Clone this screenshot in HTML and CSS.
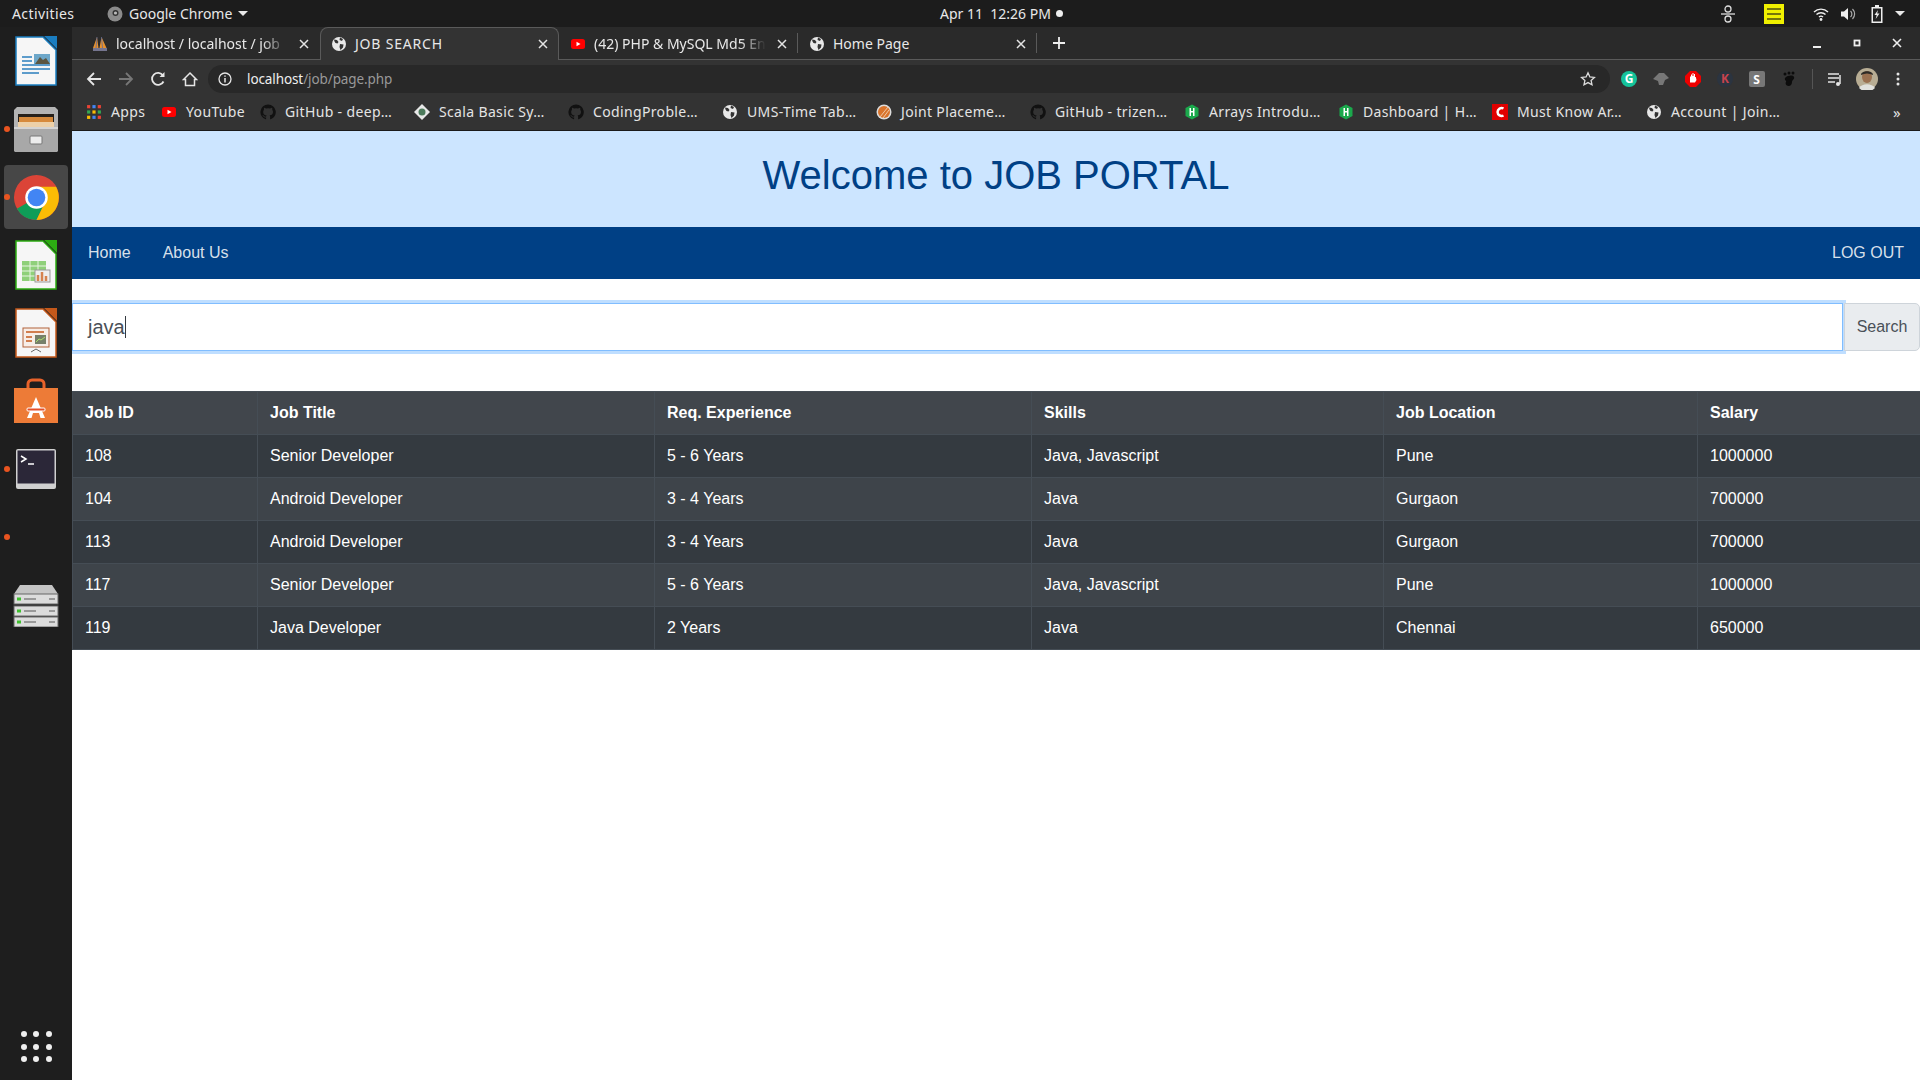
FILE: index.html
```html
<!DOCTYPE html>
<html>
	<head>
		<meta charset="UTF-8">
		<title>JOB SEARCH</title>
		<link rel="stylesheet" href="styles.css">
	</head>

	<body>
		<svg class="defs" width="0" height="0">
			<symbol id="globe" viewBox="0 0 16 16">
				<circle cx="8" cy="8" r="7" fill="#e8e8e8"/>
				<path d="M3 3.500l3 .5 1.500 2-1 1.500-2-.5-1-1.500zM9 8l3.500.5-.5 3-2.500 2.500-1-3zM9 1.500l3 1.500-1 2-2.500-1z" fill="#333"/>
			</symbol>
			<symbol id="github" viewBox="0 0 16 16">
				<path d="M8 .5a7.600 7.600 0 0 0-2.400 14.800c.4.100.5-.2.500-.4v-1.400c-2.100.5-2.600-.9-2.600-.9-.3-.9-.8-1.100-.8-1.100-.7-.5 0-.5 0-.5.8.100 1.200.8 1.200.8.700 1.200 1.800.8 2.200.6.100-.5.300-.8.500-1-1.700-.2-3.400-.8-3.400-3.700 0-.8.300-1.500.8-2-.1-.2-.3-1 .1-2 0 0 .6-.2 2.100.8a7 7 0 0 1 3.800 0c1.500-1 2.100-.8 2.100-.8.400 1 .2 1.800.1 2 .5.500.8 1.200.8 2 0 2.900-1.800 3.500-3.400 3.700.3.200.5.700.5 1.400v2.100c0 .2.100.5.500.4A7.600 7.600 0 0 0 8 .5z" fill="#111"/>
			</symbol>
			<symbol id="youtube" viewBox="0 0 16 16">
				<rect x="1" y="3" width="14" height="10" rx="2.500" fill="#f00"/>
				<path d="M6.500 5.700l4 2.300-4 2.300z" fill="#fff"/>
			</symbol>
			<symbol id="hacker" viewBox="0 0 16 16">
				<path d="M8 .5l6.500 3.500v8l-6.500 3.500-6.500-3.500v-8z" fill="#1ba94c"/>
				<path d="M5.500 4h1.500v3h2v-3h1.500v8h-1.500v-3.500h-2v3.500h-1.500z" fill="#fff"/>
			</symbol>
			<symbol id="tabclose" viewBox="0 0 10 10">
				<path d="M1 1l8 8M9 1l-8 8" stroke="#e4e4e4" stroke-width="1.500" fill="none"/>
			</symbol>
			<symbol id="doc" viewBox="0 0 42 50">
				<path d="M1 1h27l13 13v35h-40z" fill="#f6f6f6" stroke="currentColor" stroke-width="1.500"/>
				<path d="M29 0h13v13z" fill="currentColor"/>
			</symbol>
		</svg>

		<div class="topbar">
			<span class="activities">Activities</span>
			<span class="app-menu">
				<svg class="app-icon" viewBox="0 0 16 16"><circle cx="8" cy="8" r="7.500" fill="#8b8b8b"/><circle cx="8.500" cy="7" r="3" fill="#333"/><circle cx="8.500" cy="7" r="1.600" fill="#bbb"/></svg>
				Google Chrome
				<i class="caret"></i>
			</span>
			<span class="clock">Apr 11&nbsp; 12:26 PM<i class="clock-dot"></i></span>
			<span class="tray">
				<svg class="tray-a" viewBox="0 0 16 20"><circle cx="8" cy="5" r="3" fill="none" stroke="#ddd" stroke-width="1.300"/><circle cx="8" cy="15" r="3" fill="none" stroke="#ddd" stroke-width="1.300"/><path d="M1 10h14" stroke="#ddd" stroke-width="1.300"/></svg>
				<svg class="tray-b" viewBox="0 0 20 20"><rect width="20" height="20" fill="#f0f000"/><path d="M3 5h14M3 10h14M3 15h14" stroke="#77770a" stroke-width="2"/></svg>
				<svg class="tray-c" viewBox="0 0 16 14"><path d="M1 5a10 10 0 0 1 14 0M3.500 7.500a6.500 6.500 0 0 1 9 0M6 10a3 3 0 0 1 4 0" fill="none" stroke="#eee" stroke-width="1.400"/><circle cx="8" cy="12.500" r="1.400" fill="#eee"/></svg>
				<svg class="tray-d" viewBox="0 0 16 14"><path d="M1 4.500h3l4-3.500v12l-4-3.500h-3z" fill="#eee"/><path d="M10.500 4a4 4 0 0 1 0 6M12.500 2a7 7 0 0 1 0 10" fill="none" stroke="#aaa" stroke-width="1.200"/></svg>
				<svg class="tray-e" viewBox="0 0 12 18"><path d="M4 0h4v2h3.500v16h-11v-16h3.500z" fill="#eee"/><rect x="2" y="3.500" width="8" height="13" fill="#222"/><path d="M7 5l-3.500 5h2.200l-1 4 3.800-5.500h-2.300z" fill="#eee"/></svg>
				<i class="caret tray-caret"></i>
			</span>
		</div>

		<div class="desktop">
			<nav class="dock">
				<div class="dock-item">
					<svg class="dock-doc writer" viewBox="0 0 42 50"><use href="#doc"/><path d="M7 21h10M7 25h10M7 29h28M7 33h28M7 37h17" stroke="#2b7fbd" stroke-width="1.500"/><rect x="19" y="18" width="16" height="10" fill="#6da7c9"/><path d="M20 28l5-7 3 3 3-2 4 6z" fill="#5c5642"/></svg>
				</div>
				<div class="dock-item has-dot">
					<svg class="dock-icon files" viewBox="0 0 44 45">
						<path d="M3 0h38l3 3v20h-44v-20z" fill="#b4b4b4"/>
						<rect x="4" y="7" width="36" height="14" fill="#27211b"/>
						<rect x="5" y="10" width="34" height="5" fill="#d68a3c"/>
						<rect x="4" y="15" width="36" height="5" fill="#ecd0a8"/>
						<path d="M0 20h44v24l-1 1h-42l-1-1z" fill="#a8a8a8"/>
						<rect x="0" y="20" width="44" height="2" fill="#d4d4d4"/>
						<rect x="16" y="29" width="12" height="8" rx="1" fill="#ececec" stroke="#777"/>
					</svg>
				</div>
				<div class="dock-item has-dot active">
					<svg class="dock-icon chrome" viewBox="0 0 48 48"><circle cx="24" cy="24" r="23" fill="#db4437"/><path d="M24 24L4 35.500A23 23 0 0 0 24 47l11-23z" fill="#0f9d58"/><path d="M24 13h20a23 23 0 0 1-20 34l11-23z" fill="#fbbc05"/><circle cx="24" cy="24" r="11.500" fill="#fff"/><circle cx="24" cy="24" r="9" fill="#4285f4"/></svg>
				</div>
				<div class="dock-item">
					<svg class="dock-doc calc" viewBox="0 0 42 50"><use href="#doc"/><rect x="7" y="21" width="24" height="20" fill="#8fd07a"/><path d="M7 26h24M7 31h24M7 36h24M15 21v20M23 21v20" stroke="#e8f5e2"/><rect x="20" y="30" width="15" height="12" fill="#eee" stroke="#999"/><path d="M23 41v-6M27 41v-9M31 41v-5" stroke="#d5824f" stroke-width="2.500"/></svg>
				</div>
				<div class="dock-item">
					<svg class="dock-doc impress" viewBox="0 0 42 50"><use href="#doc"/><rect x="8" y="20" width="26" height="19" fill="#f7eee8" stroke="#b2623a"/><path d="M11 24h18M11 29h6M11 33h6" stroke="#c55a1d" stroke-width="1.500"/><rect x="20" y="27" width="11" height="9" fill="#77806a"/><path d="M21 34l3-3 2 1 4-3" stroke="#a9e06a" fill="none"/><path d="M16 44l5-3 5 3" stroke="#666" fill="none"/></svg>
				</div>
				<div class="dock-item">
					<svg class="dock-icon store" viewBox="0 0 44 46"><path d="M14 13v-7a4 4 0 0 1 4-4h8a4 4 0 0 1 4 4v7" fill="none" stroke="#e8622a" stroke-width="3"/><path d="M0 10h44v35h-44z" fill="#ed7b37"/><path d="M22 19l9 21h-4.500l-1.500-5h-6l-1.500 5h-4.500z" fill="#fff"/><rect x="13" y="30" width="18" height="3" rx="1" fill="#e4502a" stroke="#fff"/></svg>
				</div>
				<div class="dock-item has-dot">
					<svg class="dock-icon term" viewBox="0 0 42 42"><rect x="1" y="1" width="40" height="40" rx="2" fill="#d0d0d0"/><rect x="2.500" y="2.500" width="37" height="33" fill="#2b2738"/><path d="M6 8l5 3-5 3" fill="none" stroke="#fff" stroke-width="1.500"/><path d="M13 16h6" stroke="#fff" stroke-width="1.500"/></svg>
				</div>
				<div class="dock-item has-dot"></div>
				<div class="dock-item">
					<svg class="dock-icon server" viewBox="0 0 46 42"><path d="M7 0h32l6 9h-44z" fill="#c4c4c4"/><rect x="1" y="9" width="44" height="10" fill="#dcdcdc" stroke="#666"/><rect x="1" y="21" width="44" height="10" fill="#dcdcdc" stroke="#666"/><rect x="1" y="32" width="44" height="10" fill="#dcdcdc" stroke="#666"/><path d="M4 14h4M4 26h4M4 37h4" stroke="#3fbf2f" stroke-width="3"/><path d="M11 14h12M11 26h12M11 37h12M36 14h6M36 26h6M36 37h6" stroke="#999" stroke-width="2"/></svg>
				</div>
				<div class="apps-grid">
					<i></i><i></i><i></i><i></i><i></i><i></i><i></i><i></i><i></i>
				</div>
			</nav>

			<div class="window">
				<div class="tabstrip">
					<div class="tab">
						<svg class="favicon" viewBox="0 0 16 16"><path d="M1 12l4-11 1.500 11zM7.500 12l2-11 5 11z" fill="#e8912d"/><path d="M5 1l-1 11M9.500 1l1 11" stroke="#5a6a9a" stroke-width=".8"/><rect x="1" y="12" width="14" height="3" fill="#75758f"/></svg>
						<span class="tab-title fade">localhost / localhost / job</span>
						<svg class="tab-close"><use href="#tabclose"/></svg>
					</div>
					<div class="tab active">
						<svg class="favicon"><use href="#globe"/></svg>
						<span class="tab-title caps">JOB SEARCH</span>
						<svg class="tab-close"><use href="#tabclose"/></svg>
					</div>
					<div class="tab sep">
						<svg class="favicon"><use href="#youtube"/></svg>
						<span class="tab-title fade">(42) PHP &amp; MySQL Md5 En</span>
						<svg class="tab-close"><use href="#tabclose"/></svg>
					</div>
					<div class="tab sep">
						<svg class="favicon"><use href="#globe"/></svg>
						<span class="tab-title">Home Page</span>
						<svg class="tab-close"><use href="#tabclose"/></svg>
					</div>
					<svg class="new-tab" viewBox="0 0 12 12"><path d="M6 0v12M0 6h12" stroke="#eee" stroke-width="1.800"/></svg>
					<div class="win-btns">
						<svg viewBox="0 0 10 10"><path d="M1 9h8" stroke="#eee" stroke-width="2"/></svg>
						<svg viewBox="0 0 10 10"><rect x="2.500" y="2.500" width="5" height="5" fill="none" stroke="#eee" stroke-width="1.800"/></svg>
						<svg viewBox="0 0 10 10"><path d="M1 1l8 8M9 1l-8 8" stroke="#eee" stroke-width="1.600"/></svg>
					</div>
				</div>

				<div class="toolbar">
					<svg class="tool" viewBox="0 0 16 16"><path d="M15 8h-13M8 2l-6 6 6 6" fill="none" stroke="#e6e6e6" stroke-width="1.800"/></svg>
					<svg class="tool" viewBox="0 0 16 16"><path d="M1 8h13M8 2l6 6-6 6" fill="none" stroke="#777" stroke-width="1.800"/></svg>
					<svg class="tool" viewBox="0 0 16 16"><path d="M13.500 10.500a6 6 0 1 1-.5-6" fill="none" stroke="#e6e6e6" stroke-width="1.800"/><path d="M14.500 1v5h-5z" fill="#e6e6e6"/></svg>
					<svg class="tool" viewBox="0 0 16 16"><path d="M8 2l6.500 6.500h-2v6h-9v-6h-2z" fill="none" stroke="#e6e6e6" stroke-width="1.500"/></svg>
					<div class="omnibox">
						<svg class="info" viewBox="0 0 14 14"><circle cx="7" cy="7" r="6" fill="none" stroke="#e6e6e6" stroke-width="1.300"/><path d="M7 6v4.500M7 3.500v1.300" stroke="#e6e6e6" stroke-width="1.500"/></svg>
						<span class="url">localhost<span class="url-path">/job/page.php</span></span>
						<svg class="star" viewBox="0 0 16 16"><path d="M8 1.800l1.900 4.100 4.500.5-3.300 3 .9 4.400-4-2.200-4 2.200.9-4.400-3.300-3 4.500-.5z" fill="none" stroke="#ddd" stroke-width="1.300"/></svg>
					</div>
					<div class="extensions">
						<svg viewBox="0 0 16 16"><circle cx="8" cy="8" r="8" fill="#15c39a"/><text x="8" y="12" class="ext-text" fill="#fff">G</text></svg>
						<svg viewBox="0 0 16 16"><path d="M0 8l6-6h5l5 5-4 2-2 5h-4l-1-4z" fill="#777"/></svg>
						<svg viewBox="0 0 16 16"><path d="M5 0h6l5 5v6l-5 5h-6l-5-5v-6z" fill="#e00"/><path d="M5 11.500v-6h1v-2h1v1.500h.5v-3h1v3h.5v-2h1v3h.8l.7 3-1.500 2.500z" fill="#fff"/></svg>
						<svg viewBox="0 0 16 16"><circle cx="8" cy="8" r="8" fill="#2b3440"/><text x="8" y="12" class="ext-text" fill="#c8434e">K</text></svg>
						<svg viewBox="0 0 16 16"><rect width="16" height="16" rx="2" fill="#777"/><text x="7.500" y="12.500" class="ext-text" fill="#fff">S</text></svg>
						<svg viewBox="0 0 16 16"><path d="M4 7c3-3 8-3 9-1s-2 3-2 5-1 4-3.500 4-3.500-3-2.500-4-2-2-1-4z" fill="#0c0c0c"/><circle cx="4" cy="3" r="1.500" fill="#0c0c0c"/><circle cx="8" cy="2" r="1.500" fill="#0c0c0c"/><circle cx="12" cy="2" r="1.500" fill="#0c0c0c"/></svg>
						<i class="ext-sep"></i>
						<svg viewBox="0 0 16 16"><path d="M1 3h11M1 7h11M1 11h7" stroke="#e6e6e6" stroke-width="1.500"/><path d="M13 4v9" stroke="#e6e6e6" stroke-width="1.500"/><circle cx="11" cy="13" r="2" fill="#e6e6e6"/></svg>
						<svg class="avatar" viewBox="0 0 22 22"><circle cx="11" cy="11" r="11" fill="#b8ad94"/><ellipse cx="11" cy="9" rx="5" ry="6" fill="#9a7050"/><path d="M5 7c0-5 12-5 12 0-4-2-8-2-12 0z" fill="#2e2a26"/><path d="M3 20c3-5 13-5 16 0a11 11 0 0 1-16 0z" fill="#e1e1dd"/></svg>
						<svg viewBox="0 0 16 16"><circle cx="8" cy="3" r="1.500" fill="#e6e6e6"/><circle cx="8" cy="8" r="1.500" fill="#e6e6e6"/><circle cx="8" cy="13" r="1.500" fill="#e6e6e6"/></svg>
					</div>
				</div>

				<div class="bookmarks">
					<span class="bm bm-apps">
						<svg class="favicon" viewBox="0 0 15 15">
							<path d="M1 1h3v3h-3z" fill="#ea4335"/><path d="M6 1h3v3h-3z" fill="#4285f4"/><path d="M11 1h3v3h-3z" fill="#ea4335"/>
							<path d="M1 6h3v3h-3z" fill="#34a853"/><path d="M6 6h3v3h-3z" fill="#fbbc05"/><path d="M11 6h3v3h-3z" fill="#34a853"/>
							<path d="M1 11h3v3h-3z" fill="#fbbc05"/><path d="M6 11h3v3h-3z" fill="#4285f4"/><path d="M11 11h3v3h-3z" fill="#ea4335"/>
						</svg>
						Apps
					</span>
					<span class="bm bm-yt"><svg class="favicon"><use href="#youtube"/></svg>YouTube</span>
					<span class="bm"><svg class="favicon"><use href="#github"/></svg>GitHub - deep…</span>
					<span class="bm"><svg class="favicon" viewBox="0 0 16 16"><path d="M8 0l8 8-8 8-8-8z" fill="#e8e8e8"/><circle cx="8" cy="8" r="3.500" fill="#4c7a5b"/></svg>Scala Basic Sy…</span>
					<span class="bm"><svg class="favicon"><use href="#github"/></svg>CodingProble…</span>
					<span class="bm"><svg class="favicon"><use href="#globe"/></svg>UMS-Time Tab…</span>
					<span class="bm"><svg class="favicon" viewBox="0 0 16 16"><circle cx="8" cy="8" r="7.500" fill="#ddd"/><circle cx="8" cy="8" r="6" fill="#d9742c"/><path d="M4 13l8-10M7 14l6-8" stroke="#f0c9a8"/></svg>Joint Placeme…</span>
					<span class="bm"><svg class="favicon"><use href="#github"/></svg>GitHub - trizen…</span>
					<span class="bm"><svg class="favicon"><use href="#hacker"/></svg>Arrays Introdu…</span>
					<span class="bm"><svg class="favicon"><use href="#hacker"/></svg>Dashboard | H…</span>
					<span class="bm"><svg class="favicon" viewBox="0 0 16 16"><rect width="16" height="16" fill="#e00000"/><path d="M11.500 4.500a4 4 0 1 0 0 7" fill="none" stroke="#fff" stroke-width="2.500"/></svg>Must Know Ar…</span>
					<span class="bm"><svg class="favicon"><use href="#globe"/></svg>Account | Join…</span>
					<span class="bm-more">»</span>
				</div>

				<main class="page">
					<header class="banner">Welcome to JOB PORTAL</header>
					<nav class="menu">
						<a>Home</a>
						<a>About Us</a>
						<a class="logout">LOG OUT</a>
					</nav>
					<form class="search">
						<div class="search-box">java<i class="text-caret"></i></div>
						<button type="button" class="search-btn">Search</button>
					</form>
					<table class="jobs">
						<colgroup>
							<col class="c-id"><col class="c-title"><col class="c-exp"><col class="c-skills"><col class="c-loc"><col class="c-sal">
						</colgroup>
						<thead>
							<tr><th>Job ID</th><th>Job Title</th><th>Req. Experience</th><th>Skills</th><th>Job Location</th><th>Salary</th></tr>
						</thead>
						<tbody>
							<tr><td>108</td><td>Senior Developer</td><td>5 - 6 Years</td><td>Java, Javascript</td><td>Pune</td><td>1000000</td></tr>
							<tr><td>104</td><td>Android Developer</td><td>3 - 4 Years</td><td>Java</td><td>Gurgaon</td><td>700000</td></tr>
							<tr><td>113</td><td>Android Developer</td><td>3 - 4 Years</td><td>Java</td><td>Gurgaon</td><td>700000</td></tr>
							<tr><td>117</td><td>Senior Developer</td><td>5 - 6 Years</td><td>Java, Javascript</td><td>Pune</td><td>1000000</td></tr>
							<tr><td>119</td><td>Java Developer</td><td>2 Years</td><td>Java</td><td>Chennai</td><td>650000</td></tr>
						</tbody>
					</table>
				</main>
			</div>
		</div>
	</body>

</html>
```

FILE: styles.css
```css
* {
	padding: 0;
	margin: 0;
	box-sizing: border-box;
}

body {
	width: 1920px;
	height: 1080px;
	overflow: hidden;
	background: #fff;
	font-family: "Noto Sans", sans-serif;
}

.defs {
	display: block;
	height: 0;
}

i {
	display: block;
}

/* ubuntu top bar */
.topbar {
	height: 27px;
	background: #1c1c1c;
	color: #e8e8e8;
	font-size: 14px;
	display: flex;
	align-items: center;
	padding-left: 12px;
}

.activities {
	width: 95px;
	letter-spacing: .4px;
}

.app-menu {
	display: flex;
	align-items: center;
	gap: 6px;
	width: 333px;
}

.app-icon {
	width: 16px;
	height: 16px;
}

.caret {
	width: 0;
	height: 0;
	border-left: 5px solid transparent;
	border-right: 5px solid transparent;
	border-top: 5px solid #e8e8e8;
}

.clock {
	display: flex;
	align-items: center;
	gap: 5px;
	margin-left: 500px;
	white-space: pre;
}

.clock-dot {
	width: 7px;
	height: 7px;
	border-radius: 50%;
	background: #eee;
}

.tray {
	margin-left: auto;
	display: flex;
	align-items: center;
	padding-right: 15px;
}

.tray-a {
	width: 16px;
	height: 20px;
	margin-right: 28px;
}

.tray-b {
	width: 20px;
	height: 20px;
	margin-right: 29px;
}

.tray-c {
	width: 16px;
	height: 14px;
	margin-right: 11px;
}

.tray-d {
	width: 16px;
	height: 14px;
	margin-right: 15px;
}

.tray-e {
	width: 12px;
	height: 18px;
	margin-right: 12px;
}

/* dock */
.desktop {
	display: flex;
	height: 1053px;
}

.dock {
	width: 72px;
	flex: none;
	background: #1e1e1e;
	display: flex;
	flex-direction: column;
	align-items: center;
}

.dock-item {
	width: 64px;
	height: 68px;
	flex: none;
	display: flex;
	align-items: center;
	justify-content: center;
	position: relative;
	border-radius: 4px;
}

.dock-item.active {
	height: 64px;
	margin: 2px 0;
	background: #474747;
}

.has-dot::before {
	content: "";
	position: absolute;
	left: 0;
	top: 31px;
	width: 6px;
	height: 6px;
	border-radius: 50%;
	background: #e95420;
}

.active.has-dot::before {
	top: 29px;
}

.dock-doc {
	width: 42px;
	height: 50px;
}

.writer {
	color: #1a7dc0;
}

.calc {
	color: #2cac12;
}

.impress {
	color: #c4581a;
}

.dock-icon {
	width: 44px;
	height: 44px;
}

.files {
	height: 45px;
}

.chrome {
	width: 47px;
	height: 47px;
}

.store {
	height: 46px;
}

.term {
	width: 42px;
	height: 42px;
}

.server {
	width: 46px;
	height: 42px;
	margin-top: 2px;
}

.apps-grid {
	margin-top: auto;
	margin-bottom: 18px;
	display: grid;
	grid-template-columns: repeat(3, 6px);
	gap: 6.500px;
}

.apps-grid i {
	width: 6px;
	height: 6px;
	border-radius: 50%;
	background: #f0f0f0;
}

/* chrome window */
.window {
	flex: 1;
	min-width: 0;
	display: flex;
	flex-direction: column;
}

.tabstrip {
	height: 33px;
	background: #2a2a2a;
	border-bottom: 1px solid #5a5a5a;
	display: flex;
	padding: 0 0 0 9px;
	color: #e8e8e8;
	font-size: 14px;
}

.tab {
	width: 239px;
	height: 33px;
	flex: none;
	display: flex;
	align-items: center;
	padding-left: 11px;
	border-radius: 8px 8px 0 0;
	position: relative;
}

.tab.active {
	background: #333;
	border: 1px solid #5a5a5a;
	border-bottom: none;
	padding: 0 0 1px 10px;
}

.tab.sep::after {
	content: "";
	position: absolute;
	right: 0;
	top: 6px;
	height: 20px;
	width: 1px;
	background: #5a5a5a;
}

.favicon {
	width: 16px;
	height: 16px;
	flex: none;
}

.tab-title {
	margin-left: 8px;
	width: 172px;
	white-space: nowrap;
}

.caps {
	letter-spacing: .8px;
}

.fade {
	-webkit-mask-image: linear-gradient(to right, #000 85%, transparent);
	mask-image: linear-gradient(to right, #000 85%, transparent);
}

.tab-close {
	width: 10px;
	height: 10px;
	margin-left: 11px;
	flex: none;
}

.new-tab {
	width: 12px;
	height: 12px;
	margin: 10px 0 0 16px;
}

.win-btns {
	margin-left: auto;
	display: flex;
	gap: 30px;
	align-items: center;
	padding-right: 18px;
}

.win-btns svg {
	width: 10px;
	height: 10px;
}

.toolbar {
	height: 33px;
	background: #333;
	display: flex;
	align-items: center;
	padding: 5px 0 0 14px;
	flex: none;
}

.tool {
	width: 16px;
	height: 16px;
	margin-right: 16px;
	flex: none;
}

.omnibox {
	width: 1402px;
	height: 28px;
	margin-left: -6px;
	border-radius: 14px;
	background: #282828;
	display: flex;
	align-items: center;
	padding: 0 14px 0 10px;
	font-size: 13.500px;
	flex: none;
}

.info {
	width: 14px;
	height: 14px;
	margin-right: 15px;
}

.url {
	color: #eee;
	letter-spacing: -.1px;
}

.url-path {
	color: #999;
}

.star {
	width: 16px;
	height: 16px;
	margin-left: auto;
}

.extensions {
	display: flex;
	align-items: center;
	margin-left: 11px;
	gap: 16px;
}

.extensions svg {
	width: 16px;
	height: 16px;
	flex: none;
}

.extensions .avatar {
	width: 22px;
	height: 22px;
	margin: 0 -4px 0 -3px;
}

.ext-text {
	font-family: "Noto Sans", sans-serif;
	font-size: 12px;
	font-weight: 700;
	text-anchor: middle;
}

.ext-sep {
	width: 1px;
	height: 20px;
	background: #555;
	margin: 0 -2px 0 -1px;
}

.bookmarks {
	height: 38px;
	background: #333;
	border-bottom: 1px solid #1a1a1a;
	display: flex;
	align-items: center;
	padding-left: 13px;
	color: #e4e4e4;
	font-size: 14px;
	letter-spacing: .35px;
	flex: none;
}

.bm {
	width: 154px;
	flex: none;
	display: flex;
	align-items: center;
	gap: 9px;
	white-space: nowrap;
	padding-left: 1px;
}

.bm-apps {
	width: 75px;
}

.bm-yt {
	width: 99px;
}

.bm-more {
	margin-left: auto;
	margin-right: 19px;
	font-size: 15px;
}

/* the page itself */
.page {
	flex: 1;
	overflow: hidden;
	font-family: "Liberation Sans", Arial, sans-serif;
	font-size: 16px;
	color: #212529;
}

.banner {
	height: 96px;
	padding-bottom: 8px;
	background: #cce5ff;
	color: #004085;
	font-size: 40px;
	display: flex;
	align-items: center;
	justify-content: center;
}

.menu {
	height: 52px;
	background: #004085;
	color: rgba(255, 255, 255, .85);
	display: flex;
	align-items: center;
	padding: 0 16px;
	gap: 32px;
}

.logout {
	margin-left: auto;
}

.search {
	display: flex;
	margin: 24px 0 40px;
	height: 48px;
}

.search-box {
	flex: 1;
	border: 1px solid #80bdff;
	box-shadow: 0 0 0 3px #bfdeff;
	display: flex;
	align-items: center;
	padding-left: 15px;
	font-size: 20px;
	color: #495057;
}

.text-caret {
	width: 1px;
	height: 22px;
	background: #343a40;
}

.search-btn {
	width: 76px;
	margin-left: 1px;
	background: #e9ecef;
	border: 1px solid #ced4da;
	border-radius: 0 5px 5px 0;
	color: #495057;
	font: inherit;
}

.jobs {
	width: 100%;
	table-layout: fixed;
	border-collapse: collapse;
	background: #343a40;
	color: #fff;
}

.c-id {
	width: 185px;
}

.c-title {
	width: 397px;
}

.c-exp {
	width: 377px;
}

.c-skills {
	width: 352px;
}

.c-loc {
	width: 314px;
}

.c-sal {
	width: 223px;
}

.jobs th,
.jobs td {
	padding: 9px 12px;
	line-height: 24px;
	text-align: left;
	border: 1px solid #454d55;
}

.jobs th {
	background: #41464c;
	height: 43px;
}

.jobs tbody tr:nth-child(even) {
	background: #3e444a;
}
```
